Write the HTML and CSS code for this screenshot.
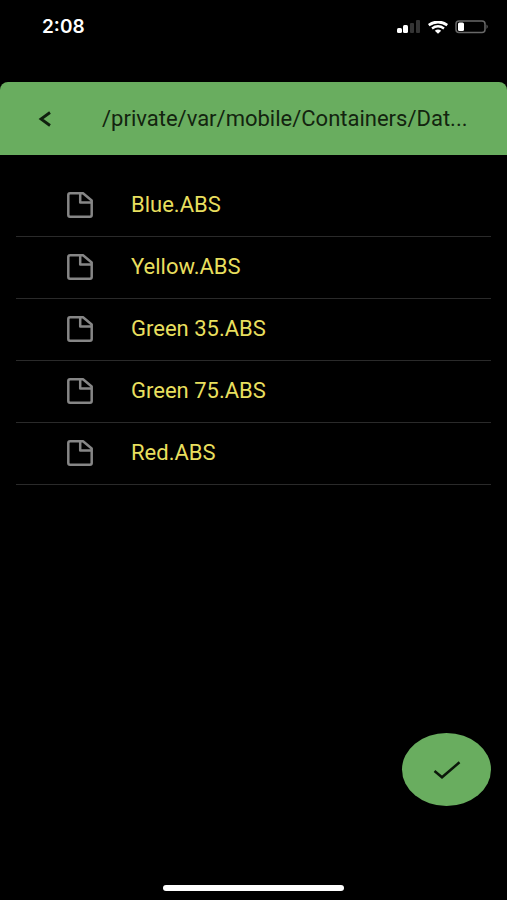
FILE: index.html
```html
<!DOCTYPE html>
<html lang="en">
<head>
<meta charset="utf-8">
<meta name="viewport" content="width=device-width, initial-scale=1">
<title>Files</title>
<link rel="stylesheet" href="styles.css">
</head>
<body>
<div class="status">
  <span class="time">2:08</span>
  <div class="indicators">
    <svg width="24" height="14" viewBox="0 0 24 14"><g fill="#fff"><rect x="0" y="8" width="5" height="5" rx="1.500"/><rect x="6" y="5" width="5" height="8" rx="1.500"/></g><g fill="#343434"><rect x="13" y="3" width="4" height="10" rx="1"/><rect x="19" y="0" width="4" height="13" rx="1"/></g></svg>
    <svg width="20" height="13" viewBox="0 0 20 13" fill="none" stroke="#fff"><path d="M.7 4.1Q10-2.1 19.300 4.1" stroke-width="2.800"/><path d="M4 7.400Q10 3.200 16 7.400" stroke-width="2.500"/><path d="M6.800 9.800Q10 7.400 13.200 9.800L10 12.800Z" fill="#fff" stroke="none"/></svg>
    <svg width="34" height="14" viewBox="0 0 34 14"><rect x="1" y="1" width="29" height="11.500" rx="3" fill="none" stroke="#686868" stroke-width="1.500"/><rect x="3" y="2.500" width="6" height="8.500" rx="1.500" fill="#fff"/><path d="M31.500 4.500Q34 6.700 31.500 9Z" fill="#686868"/></svg>
  </div>
</div>
<header class="bar">
  <button class="back" aria-label="Back"><svg width="14" height="18" viewBox="0 0 14 18" fill="none" stroke="#10200f" stroke-width="2.800"><path d="M12 2.500L3 9l9 6.500"/></svg></button>
  <h1 class="path">/private/var/mobile/Containers/Dat...</h1>
</header>
<main>
  <svg class="defs" width="0" height="0"><symbol id="file" viewBox="0 0 26 26"><path d="M3 1.300H16L24.700 8.500V23q0 1.700-1.700 1.700H3q-1.700 0-1.700-1.700V3q0-1.700 1.700-1.700ZM13.200 1.500V10.500H24.500" fill="none" stroke="#868686" stroke-width="2.500" stroke-linejoin="round"/></symbol></svg>
  <ul class="files">
    <li><svg class="icon"><use href="#file"/></svg><span>Blue.ABS</span></li>
    <li><svg class="icon"><use href="#file"/></svg><span>Yellow.ABS</span></li>
    <li><svg class="icon"><use href="#file"/></svg><span>Green 35.ABS</span></li>
    <li><svg class="icon"><use href="#file"/></svg><span>Green 75.ABS</span></li>
    <li><svg class="icon"><use href="#file"/></svg><span>Red.ABS</span></li>
  </ul>
</main>
<footer class="foot">
  <button class="confirm" aria-label="Confirm"><svg width="28" height="20" viewBox="0 0 28 20" fill="none" stroke="#0c180b" stroke-width="2.500"><path d="M1.500 11L9 17.300L26.500 2.300"/></svg></button>
  <div class="home"></div>
</footer>
</body>
</html>
```
FILE: styles.css
```css
* { box-sizing: border-box; }
body {
  margin: 0;
  min-height: 100vh;
  display: flex;
  flex-direction: column;
  background: #000;
  color: #fff;
  font-family: Roboto, "Liberation Sans", sans-serif;
}
button { border: 0; padding: 0; cursor: pointer; }
svg { display: block; }
.status {
  display: flex;
  justify-content: space-between;
  align-items: flex-start;
  padding: 16px 18px 0 42px;
  height: 82px;
}
.time { font: 600 19px/22px Inter, sans-serif; }
.indicators { display: flex; align-items: center; gap: 7px; padding-top: 4px; }
.bar {
  display: flex;
  align-items: center;
  height: 73px;
  padding-right: 16px;
  border-radius: 8px 8px 0 0;
  background: #69ad5f;
}
.back {
  display: flex;
  align-items: center;
  justify-content: center;
  width: 90px;
  height: 72px;
  margin-right: 12px;
  background: transparent;
}
.path {
  margin: 0;
  color: #13240f;
  font-size: 22px;
  font-weight: 400;
  line-height: 28px;
  white-space: nowrap;
}
.defs { position: absolute; }
.files {
  list-style: none;
  margin: 0;
  padding: 20px 16px 0;
}
.files li {
  display: flex;
  align-items: center;
  gap: 38px;
  height: 62px;
  padding: 0 0 1px 51px;
  border-bottom: 1px solid #2a2a2a;
  color: #e8df5e;
  font-size: 22px;
  line-height: 28px;
}
.icon { width: 26px; height: 26px; }
.foot {
  display: flex;
  flex-direction: column;
  margin-top: auto;
  padding: 0 16px 9px;
}
.confirm {
  display: flex;
  align-items: center;
  justify-content: center;
  align-self: flex-end;
  width: 89px;
  height: 73px;
  margin-bottom: 79px;
  border-radius: 50%;
  background: #69ad5f;
}
.home {
  align-self: center;
  width: 38%;
  height: 6px;
  border-radius: 3px;
  background: #fff;
}
```
